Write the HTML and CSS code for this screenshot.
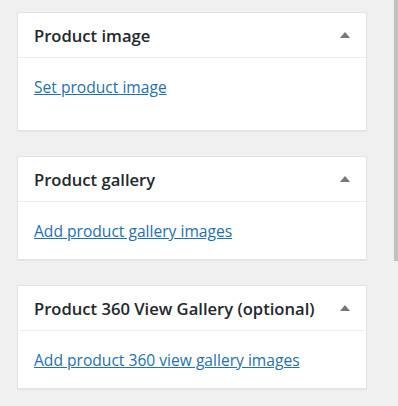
FILE: index.html
```html
<!DOCTYPE html>
<html lang="en">
<head>
    <meta charset="UTF-8">
    <meta name="viewport" content="width=device-width, initial-scale=1.0">
    <title>Product boxes</title>
    <link rel="stylesheet" href="styles.css">
</head>
<body>
    <div class="page">
        <div class="sidebar">
            <div class="postbox postbox-image">
                <div class="postbox-header">
                    <h2>Product image</h2>
                    <span class="toggle"></span>
                </div>
                <div class="inside">
                    <a href="#">Set product image</a>
                </div>
            </div>
            <div class="postbox">
                <div class="postbox-header">
                    <h2>Product gallery</h2>
                    <span class="toggle"></span>
                </div>
                <div class="inside">
                    <a href="#">Add product gallery images</a>
                </div>
            </div>
            <div class="postbox">
                <div class="postbox-header">
                    <h2>Product 360 View Gallery (optional)</h2>
                    <span class="toggle"></span>
                </div>
                <div class="inside">
                    <a href="#">Add product 360 view gallery images</a>
                </div>
            </div>
        </div>
        <div class="scrollbar">
            <div class="thumb"></div>
        </div>
    </div>
</body>
</html>
```

FILE: styles.css
```css
body {
	margin: 0;
	background-color: #f0f0f0;
	font-family: "Open Sans", "Noto Sans", sans-serif;
	height: 406px;
	overflow: hidden;
}
.page {
	display: flex;
	height: 100%;
}
.sidebar {
	width: 350px;
	padding: 12px 0 0 17px;
}
.postbox {
	background-color: white;
	border: 1px solid #e2e3e5;
	box-shadow: 0 1px 1px rgba(0,0,0,0.04);
	margin-bottom: 25px;
}
.postbox-header {
	display: flex;
	align-items: center;
	justify-content: space-between;
	height: 44px;
	padding: 0 16px 0 16px;
	border-bottom: 1px solid #eeeeee;
}
.postbox-header h2 {
	margin: 0;
	font-size: 16.6px;
	font-weight: 600;
	color: #23282d;
}
.toggle {
	width: 0;
	height: 0;
	border-left: 5px solid transparent;
	border-right: 5px solid transparent;
	border-bottom: 6px solid #72777c;
}
.inside {
	padding: 18px 16px 16px;
	height: 23px;
}
.postbox-image .inside {
	height: 38px;
}
.inside a {
	font-size: 15.6px;
	color: #2271b1;
	text-decoration: underline;
}
.scrollbar {
	margin-left: auto;
	width: 4px;
}
.thumb {
	height: 261px;
	background-color: #c1c1c1;
}
```
